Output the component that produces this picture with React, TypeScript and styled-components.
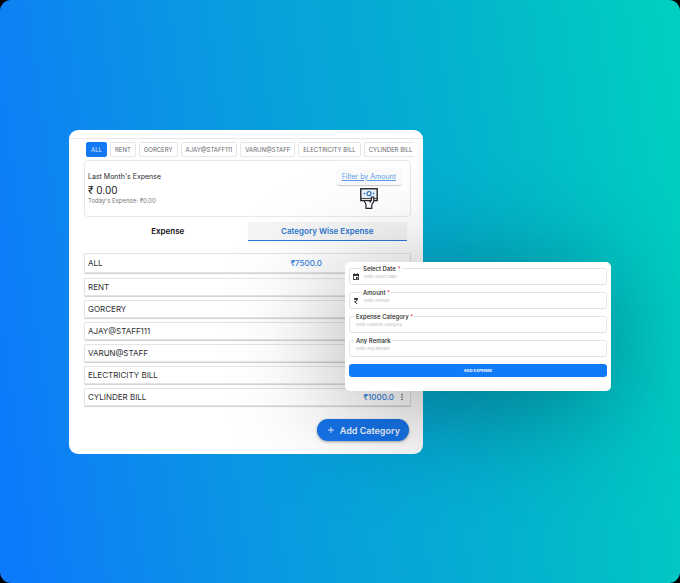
import React, { useState } from "react";
import styled, { createGlobalStyle } from "styled-components";
import { MdEvent, MdCurrencyRupee, MdMoreVert, MdAdd } from "react-icons/md";

const GlobalStyle = createGlobalStyle`
  *, *::before, *::after { box-sizing: border-box; }
  body { margin: 0; background: #000; }
  body, button, input { font-family: Inter, "Noto Sans", sans-serif; }
  button { cursor: pointer; }
`;

const Stage = styled.main`
  min-height: 100vh;
  padding: 130px 0 100px;
  border-radius: 11px;
  background: linear-gradient(82deg, #0d7bf9 4%, #0a97e3 34%, #04b1cf 67%, #00cfbf 98%);
  display: grid;
  grid-template-columns: 69fr 276fr 78fr 188fr 69fr;
  align-items: start;
`;

const Card = styled.section`
  grid-column: 2 / 4;
  grid-row: 1;
  min-width: 0;
  background: #fff;
  border-radius: 9px;
  padding: 8px 0 13px;
`;

const CardBody = styled.div`
  border-top: 1px solid #e8e8ea;
  padding: 3px 12px 0 15px;
`;

const Chips = styled.div`
  display: flex;
  gap: 3px;
  margin-right: -3px;
  padding-left: 2px;
  overflow: hidden;
`;

const Chip = styled.button<{ $active: boolean }>`
  flex: none;
  height: 15px;
  padding: 0 4px;
  border: 1px solid ${(p) => (p.$active ? "#1478f5" : "#e6e6e9")};
  border-radius: 2px;
  background: ${(p) => (p.$active ? "#1478f5" : "transparent")};
  color: ${(p) => (p.$active ? "#d5e7ff" : "#68686c")};
  font-size: 6px;
  line-height: 12px;
`;

const Summary = styled.div`
  margin-top: 3px;
  height: 57px;
  padding: 7px 9px 6px 3px;
  border: 1px solid #e8e8eb;
  border-radius: 4px;
  display: flex;
  justify-content: space-between;
`;

const Totals = styled.div`
  display: flex;
  flex-direction: column;
  padding-top: 4px;
`;

const TotalsTitle = styled.span`
  font-size: 7px;
  line-height: 10px;
  color: #2b2b2e;
`;

const TotalsAmount = styled.strong`
  font-size: 10px;
  line-height: 16px;
  font-weight: 400;
  color: #19191b;
`;

const TotalsNote = styled.span`
  font-size: 6px;
  line-height: 6px;
  color: #77777b;
`;

const SummarySide = styled.div`
  display: flex;
  flex-direction: column;
  align-items: center;
  gap: 3px;
`;

const FilterButton = styled.button`
  height: 17px;
  padding: 0 5px;
  border: 0;
  border-radius: 2px;
  background: #fbfbfc;
  box-shadow: 0 1px 1px rgba(0, 0, 0, 0.2);
  color: #5b9bea;
  font-size: 7px;
  line-height: 14px;
  text-decoration: underline;
`;

const Tabs = styled.div`
  display: flex;
  margin-top: 5px;
  padding: 0 4px;
`;

const Tab = styled.button<{ $active: boolean }>`
  flex: 1;
  height: 19px;
  padding: 0;
  border: 0;
  border-bottom: 1px solid ${(p) => (p.$active ? "#2a7bdc" : "transparent")};
  background: ${(p) => (p.$active ? "rgba(0, 0, 0, 0.04)" : "transparent")};
  color: ${(p) => (p.$active ? "#2a76cf" : "#111")};
  font-size: 8px;
  line-height: 16px;
  font-weight: 600;
`;

const CategoryList = styled.ul`
  list-style: none;
  margin: 12px 0 0;
  padding: 0;
  display: flex;
  flex-direction: column;
  gap: 4px;
`;

const Category = styled.li<{ $total?: boolean }>`
  height: ${(p) => (p.$total ? 20 : 18)}px;
  padding: 0 3px;
  border: 1px solid #e4e4e6;
  border-radius: 1px;
  box-shadow: 0 1px 1px rgba(0, 0, 0, 0.18);
  display: grid;
  grid-template-columns: 1fr auto ${(p) => (p.$total ? "82px" : "10px")};
  align-items: center;
  column-gap: 3px;
  font-size: 8px;
  line-height: 12px;
  color: #2e2e31;

  &:first-child { margin-bottom: 1px; }
`;

const Amount = styled.span`
  color: #3181dc;
  font-weight: 500;
`;

const MenuButton = styled.button`
  display: flex;
  justify-content: center;
  padding: 0;
  border: 0;
  background: none;
  color: #55555a;
  font-size: 10px;
`;

const CardFooter = styled.div`
  display: flex;
  justify-content: flex-end;
  margin-top: 13px;
  padding-right: 2px;
`;

const AddCategory = styled.button`
  height: 22px;
  padding: 0 9px;
  border: 0;
  border-radius: 11px;
  background: #1674ea;
  box-shadow: 0 1px 3px rgba(0, 0, 0, 0.35);
  color: #eef5ff;
  display: flex;
  align-items: center;
  gap: 4px;
  font-size: 9px;
  font-weight: 600;

  svg { font-size: 10px; }
`;

const Dialog = styled.form`
  grid-column: 3 / 5;
  grid-row: 1;
  z-index: 1;
  min-width: 0;
  margin-top: 132px;
  padding: 6px 4px 14px;
  border-radius: 5px;
  background: #fff;
  box-shadow: -6px 16px 110px rgba(0, 0, 0, 0.35);
  display: flex;
  flex-direction: column;
  gap: 7px;
`;

const Field = styled.div<{ $icon: boolean }>`
  position: relative;
  height: 17px;
  padding: 0 ${(p) => (p.$icon ? 2 : 6)}px;
  border: 1px solid #e4e4e8;
  border-radius: 3px;
  display: flex;
  align-items: center;
  gap: 4px;
  color: #151517;
  font-size: 8px;

  svg { flex: none; }
`;

const FieldLabel = styled.label<{ $icon: boolean }>`
  position: absolute;
  top: -4px;
  left: ${(p) => (p.$icon ? 12 : 5)}px;
  padding: 0 1px;
  background: #fff;
  color: #1d1d20;
  font-size: 6px;
  line-height: 7px;
  font-weight: 500;
`;

const Required = styled.span`
  color: #e23b3b;
`;

const FieldInput = styled.input`
  flex: 1;
  min-width: 0;
  padding: 0;
  border: 0;
  outline: 0;
  background: none;
  color: #222;
  font-size: 4px;
  line-height: 8px;

  &::placeholder { color: #b9b9be; opacity: 1; }
`;

const Submit = styled.button`
  height: 13px;
  padding: 0;
  border: 0;
  border-radius: 3px;
  background: #117af6;
  color: #e9f3ff;
  font-size: 4px;
  font-weight: 800;
`;

const CashIcon = () => (
  <svg width="18" height="21" viewBox="0 0 18 21" fill="none" aria-hidden="true">
    <rect x="0.8" y="0.8" width="16.4" height="11.8" fill="#fff" stroke="#20252b" strokeWidth="1.4" />
    <path d="M1 10.4h16" stroke="#20252b" strokeWidth="0.9" />
    <rect x="2.4" y="2.4" width="13.2" height="6.6" fill="#e3efff" />
    <circle cx="9" cy="5.6" r="2" fill="#fff" stroke="#2c6fb8" strokeWidth="1.2" />
    <circle cx="4.4" cy="5.6" r="0.8" fill="#2c6fb8" />
    <circle cx="13.6" cy="5.6" r="0.8" fill="#2c6fb8" />
    <path
      d="M4.2 12.6l1.8 4v3.8h5.8v-3.8l2-3.2V9.2h-2.4v3.2l-1.8 2.2"
      fill="#fff"
      stroke="#20252b"
      strokeWidth="1.2"
      strokeLinejoin="round"
    />
  </svg>
);

const filters = ["ALL", "RENT", "GORCERY", "AJAY@STAFF111", "VARUN@STAFF", "ELECTRICITY BILL", "CYLINDER BILL"];
const tabs = ["Expense", "Category Wise Expense"];

const categories: { name: string; amount?: string; menu?: boolean }[] = [
  { name: "ALL", amount: "₹7500.0" },
  { name: "RENT" },
  { name: "GORCERY" },
  { name: "AJAY@STAFF111" },
  { name: "VARUN@STAFF" },
  { name: "ELECTRICITY BILL" },
  { name: "CYLINDER BILL", amount: "₹1000.0", menu: true },
];

const fields = [
  { id: "date", label: "Select Date", placeholder: "Enter Select Date", required: true, icon: <MdEvent /> },
  { id: "amount", label: "Amount", placeholder: "Enter Amount", required: true, icon: <MdCurrencyRupee /> },
  { id: "category", label: "Expense Category", placeholder: "Enter Expense Category", required: true, icon: null },
  { id: "remark", label: "Any Remark", placeholder: "Enter Any Remark", required: false, icon: null },
];

export default function App() {
  const [filter, setFilter] = useState("ALL");
  const [tab, setTab] = useState("Category Wise Expense");

  return (
    <>
      <GlobalStyle />
      <Stage>
        <Card>
          <CardBody>
            <Chips>
              {filters.map((name) => (
                <Chip key={name} type="button" $active={name === filter} onClick={() => setFilter(name)}>
                  {name}
                </Chip>
              ))}
            </Chips>
            <Summary>
              <Totals>
                <TotalsTitle>Last Month's Expense</TotalsTitle>
                <TotalsAmount>₹ 0.00</TotalsAmount>
                <TotalsNote>Today's Expense: ₹0.00</TotalsNote>
              </Totals>
              <SummarySide>
                <FilterButton type="button">Filter by Amount</FilterButton>
                <CashIcon />
              </SummarySide>
            </Summary>
            <Tabs role="tablist">
              {tabs.map((name) => (
                <Tab
                  key={name}
                  type="button"
                  role="tab"
                  aria-selected={name === tab}
                  $active={name === tab}
                  onClick={() => setTab(name)}
                >
                  {name}
                </Tab>
              ))}
            </Tabs>
            <CategoryList>
              {categories.map((c) => (
                <Category key={c.name} $total={c.name === "ALL"}>
                  <span>{c.name}</span>
                  <Amount>{c.amount}</Amount>
                  {c.menu && (
                    <MenuButton type="button" aria-label={`${c.name} options`}>
                      <MdMoreVert />
                    </MenuButton>
                  )}
                </Category>
              ))}
            </CategoryList>
            <CardFooter>
              <AddCategory type="button">
                <MdAdd />
                Add Category
              </AddCategory>
            </CardFooter>
          </CardBody>
        </Card>
        <Dialog onSubmit={(e) => e.preventDefault()}>
          {fields.map((f) => (
            <Field key={f.id} $icon={!!f.icon}>
              <FieldLabel htmlFor={f.id} $icon={!!f.icon}>
                {f.label} {f.required && <Required>*</Required>}
              </FieldLabel>
              {f.icon}
              <FieldInput id={f.id} placeholder={f.placeholder} />
            </Field>
          ))}
          <Submit type="submit">ADD EXPENSE</Submit>
        </Dialog>
      </Stage>
    </>
  );
}
